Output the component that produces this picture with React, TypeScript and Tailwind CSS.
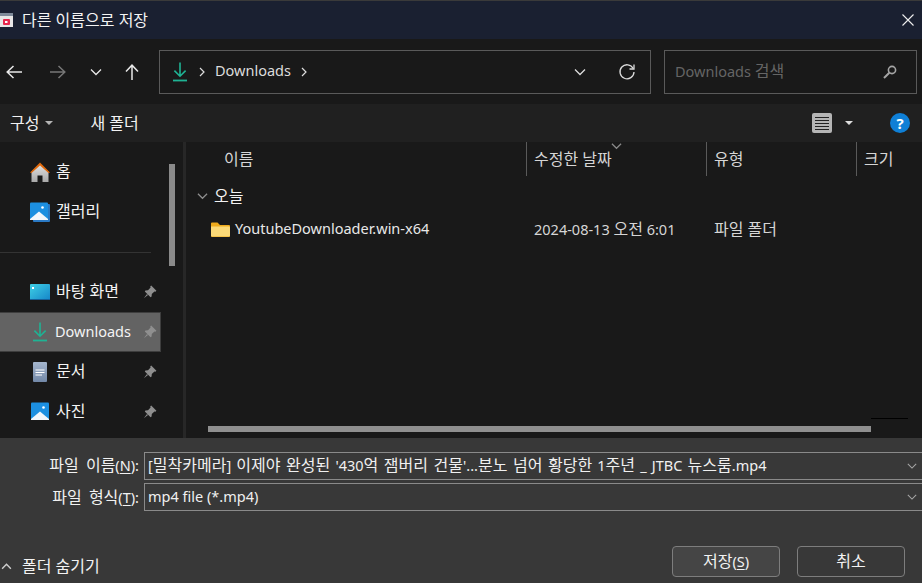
import React from "react";

function T({ children }: { children: string }) {
  const parts = children.split(/([\uAC00-\uD7A3]+(?: [\uAC00-\uD7A3]+)*)/);
  return (
    <>
      {parts.map((p, i) =>
        i % 2 === 1 ? (
          <span key={i} className="text-[16px]">{p}</span>
        ) : (
          <span key={i} className="text-[14.5px]">{p}</span>
        )
      )}
    </>
  );
}

function Pin() {
  return (
    <svg width="14" height="14" viewBox="0 0 14 14" className="shrink-0">
      <path d="M8.2 0.6 L13.4 5.8 L12.4 6.8 L11.4 6.4 L8.8 9 L8.6 11.6 L7.6 12.2 L1.8 6.4 L2.4 5.4 L5 5.2 L7.6 2.6 L7.2 1.6 Z" fill="#8f8f8f" />
      <path d="M4 9 L0.8 13.2 L5 10 Z" fill="#8f8f8f" />
    </svg>
  );
}

function DownloadIcon() {
  return (
    <svg width="20" height="20" viewBox="0 0 20 20" className="shrink-0">
      <path d="M10 0.5 V14 M4.4 8.6 L10 14.2 L15.6 8.6" fill="none" stroke="#1fb394" strokeWidth="1.6" />
      <path d="M3 18.5 H17" stroke="#1fb394" strokeWidth="1.8" />
    </svg>
  );
}

function Home() {
  return (
    <svg width="20" height="20" viewBox="0 0 20 20">
      <defs>
        <linearGradient id="hb" x1="0" y1="0" x2="0" y2="1">
          <stop offset="0" stopColor="#e4e4e4" />
          <stop offset="1" stopColor="#a8a8a8" />
        </linearGradient>
      </defs>
      <path d="M1.5 10 L10 2 L18.5 10 V20 H12.5 V13.5 H7.5 V20 H1.5 Z" fill="url(#hb)" />
      <path d="M0 10.5 L10 0.5 L20 10.5 L18.5 11 L10 3.5 L1.5 11 Z" fill="#e0690c" />
    </svg>
  );
}

function Picture({ stack }: { stack?: boolean }) {
  return (
    <svg width="20" height="20" viewBox="0 0 20 20">
      {stack && <rect x="3" y="2" width="17" height="18" rx="1" fill="#2a79c4" />}
      <rect x="0" y="0.5" width="18" height="17.5" rx="1" fill="#1c8fe0" />
      <path d="M0 17 L9 9.5 L18 17 V18 H0 Z" fill="#f2f6fb" />
      <circle cx="12.5" cy="5.5" r="1.3" fill="#fff" />
    </svg>
  );
}

function SideItem({ icon, label, pin, active }: { icon: React.ReactNode; label: string; pin?: boolean; active?: boolean }) {
  return (
    <div className={`flex items-center h-10 w-[161px] pr-[3px] text-[#f4f4f4] border ${active ? "bg-[#636363] border-[#3e3e3e] border-l-0 pl-[30px]" : "border-transparent pl-[29px]"}`}>
      <span className={`shrink-0 flex items-center ${active ? "w-[25px]" : "w-[26px]"}`}>{icon}</span>
      <span className={`flex-1 whitespace-nowrap ${active ? "" : "-translate-y-px"}`}><T>{label}</T></span>
      {pin && <Pin />}
    </div>
  );
}

function Chevron({ className, color = "#d8d8d8" }: { className?: string; color?: string }) {
  return (
    <svg width="12" height="8" viewBox="0 0 12 8" className={className}>
      <path d="M1 1.5 L6 6.5 L11 1.5" fill="none" stroke={color} strokeWidth="1.3" />
    </svg>
  );
}

function Caret({ color = "#b5b5b5" }: { color?: string }) {
  return <span className="inline-block border-x-[4px] border-x-transparent border-t-[4px]" style={{ borderTopColor: color }} />;
}

function Accel({ c }: { c: string }) {
  return <span className="underline underline-offset-2 text-[14.5px]">{c}</span>;
}

export default function App() {
  return (
    <div className="w-[922px] h-[583px] overflow-hidden flex flex-col text-[14.5px] text-[#f2f2f2] bg-[#191919] font-['Noto_Sans','Noto_Sans_CJK_KR',sans-serif]">
      {/* title bar */}
      <div className="h-[39px] shrink-0 flex items-center bg-[#1a2031] border-t border-[#3a3a3a]">
        <svg width="14" height="16" viewBox="0 0 14 16" className="shrink-0">
          <rect x="0" y="1" width="13" height="3" fill="#7f8a99" />
          <rect x="0" y="4" width="13" height="11" fill="#e8e6e6" />
          <rect x="3" y="7" width="7" height="6" rx="1" fill="#e8274d" />
          <rect x="5" y="9" width="2.5" height="2" fill="#fff" />
        </svg>
        <span className="ml-2 flex-1 text-[#f4f4f4]"><T>다른 이름으로 저장</T></span>
        <svg width="12" height="12" viewBox="0 0 12 12" className="mr-[8px]">
          <path d="M0.5 0.5 L11.5 11.5 M11.5 0.5 L0.5 11.5" stroke="#eee" strokeWidth="1.1" />
        </svg>
      </div>

      {/* nav bar */}
      <div className="h-[65px] shrink-0 flex items-center bg-[#191919] pl-[6px] pr-[5px]">
        <svg width="16" height="14" viewBox="0 0 16 14" className="shrink-0">
          <path d="M16 7 H1.5 M7.5 1 L1.2 7 L7.5 13" fill="none" stroke="#e8e8e8" strokeWidth="1.5" />
        </svg>
        <svg width="16" height="14" viewBox="0 0 16 14" className="shrink-0 ml-[28px]">
          <path d="M0 7 H14.5 M8.5 1 L14.8 7 L8.5 13" fill="none" stroke="#777777" strokeWidth="1.5" />
        </svg>
        <Chevron className="ml-[24px] shrink-0" color="#e8e8e8" />
        <svg width="14" height="16" viewBox="0 0 14 16" className="shrink-0 ml-[23px]">
          <path d="M7 16 V1.5 M1 7.5 L7 1.2 L13 7.5" fill="none" stroke="#e8e8e8" strokeWidth="1.5" />
        </svg>
        <div className="ml-[20px] w-[492px] shrink-0 h-[44px] flex items-center border border-[#5a5a5a] pl-[10px] pr-[14px]">
          <DownloadIcon />
          <svg width="6" height="10" viewBox="0 0 6 10" className="ml-[9px]"><path d="M1 1 L5 5 L1 9" fill="none" stroke="#ddd" strokeWidth="1.2" /></svg>
          <span className="ml-[10px] text-[#dcdcdc] -translate-y-px">Downloads</span>
          <svg width="6" height="10" viewBox="0 0 6 10" className="ml-[10px]"><path d="M1 1 L5 5 L1 9" fill="none" stroke="#ddd" strokeWidth="1.2" /></svg>
          <span className="flex-1" />
          <Chevron className="mr-[32px]" color="#dcdcdc" />
          <svg width="18" height="18" viewBox="0 0 18 18">
            <path d="M15.2 5.5 A7 7 0 1 0 16 9" fill="none" stroke="#dcdcdc" strokeWidth="1.3" />
            <path d="M16 1.5 V6 H11.5" fill="none" stroke="#dcdcdc" strokeWidth="1.3" />
          </svg>
        </div>
        <div className="ml-[13px] w-[253px] shrink-0 h-[44px] flex items-center border border-[#5a5a5a] pl-[10px] pr-[19px]">
          <span className="flex-1 text-[#656565] -translate-y-px"><T>Downloads 검색</T></span>
          <svg width="14" height="14" viewBox="0 0 14 14">
            <circle cx="9" cy="5" r="3.6" fill="none" stroke="#a5a5a5" strokeWidth="1.6" />
            <path d="M6.3 7.7 L1 13" stroke="#a5a5a5" strokeWidth="2" />
          </svg>
        </div>
      </div>

      {/* toolbar */}
      <div className="h-[38px] shrink-0 flex items-center bg-[#202020] pl-[10px] pr-[12px]">
        <T>구성</T>
        <span className="ml-[6px] flex"><Caret /></span>
        <span className="ml-[37px]"><T>새 폴더</T></span>
        <span className="flex-1" />
        <span className="w-5 h-5 bg-[#b5b5b5] rounded-[2px] flex flex-col justify-center gap-[2px] px-[3px]">
          <span className="h-px bg-[#222]" /><span className="h-px bg-[#222]" /><span className="h-px bg-[#222]" /><span className="h-px bg-[#222]" /><span className="h-px bg-[#222]" />
        </span>
        <span className="ml-[13px] flex"><Caret color="#dddddd" /></span>
        <span className="ml-[37px] w-5 h-5 rounded-full bg-[#0f7fd6] flex items-center justify-center text-white font-bold text-[15px] leading-none">?</span>
      </div>

      {/* main */}
      <div className="h-[296px] shrink-0 flex bg-[#191919]">
        {/* sidebar */}
        <div className="w-[183px] shrink-0 flex">
          <div className="w-[169px] shrink-0 flex flex-col pt-[10px]">
            <SideItem icon={<Home />} label="홈" />
            <SideItem icon={<Picture stack />} label="갤러리" />
            <div className="h-px w-[151px] bg-[#333333] mt-[20px] mb-[19px]" />
            <SideItem pin label="바탕 화면" icon={
              <svg width="20" height="16" viewBox="0 0 20 16">
                <defs>
                  <linearGradient id="dk" x1="0" y1="0" x2="1" y2="1">
                    <stop offset="0" stopColor="#3fd0e6" />
                    <stop offset="1" stopColor="#1585c8" />
                  </linearGradient>
                </defs>
                <rect width="20" height="16" rx="1" fill="url(#dk)" />
                <rect y="15" width="20" height="1" fill="#15609a" />
                <rect x="2" y="3" width="2" height="2" fill="#fff" />
              </svg>
            } />
            <SideItem active pin label="Downloads" icon={<DownloadIcon />} />
            <SideItem pin label="문서" icon={
              <svg width="20" height="20" viewBox="0 0 20 20">
                <defs>
                  <linearGradient id="dc" x1="0" y1="0" x2="0" y2="1">
                    <stop offset="0" stopColor="#a5b6cd" />
                    <stop offset="1" stopColor="#7288a8" />
                  </linearGradient>
                </defs>
                <rect x="3" y="0" width="14" height="20" rx="1" fill="url(#dc)" />
                <path d="M5.5 8 H14.5 M5.5 10.5 H14.5 M5.5 13 H12" stroke="#fff" strokeWidth="1" />
              </svg>
            } />
            <SideItem pin label="사진" icon={<span className="pl-[1px] flex"><Picture /></span>} />
          </div>
          <div className="w-[14px] shrink-0 pt-[22px]">
            <div className="w-[6px] h-[102px] bg-[#8a8a8a]" />
          </div>
        </div>
        <div className="w-[3px] shrink-0 bg-[#272727]" />

        {/* list */}
        <div className="flex-1 flex flex-col min-w-0">
          <div className="h-[34px] shrink-0 flex text-[#d6d6d6] relative">
            <div className="w-[340px] pl-[38px] flex items-center"><span><T>이름</T></span></div>
            <div className="w-[180px] pl-[7px] flex items-center border-l border-[#5a5a5a] relative">
              <span><T>수정한 날짜</T></span>
              <Chevron className="absolute left-[84px] top-0 w-[11px]" color="#8a8a8a" />
            </div>
            <div className="w-[150px] pl-[7px] flex items-center border-l border-[#5a5a5a]"><span><T>유형</T></span></div>
            <div className="flex-1 pl-[7px] flex items-center border-l border-[#5a5a5a]"><span><T>크기</T></span></div>
          </div>
          <div className="h-[40px] flex items-center pl-[11px] text-[#f2f2f2]">
            <Chevron color="#8f8f8f" className="w-[11px]" />
            <span className="ml-[6px]"><T>오늘</T></span>
          </div>
          <div className="h-[26px] flex items-center text-[#e8e8e8]">
            <span className="w-[340px] flex items-center pl-[25px]">
              <svg width="19" height="15" viewBox="0 0 19 15" className="shrink-0">
                <path d="M0 1.5 A1 1 0 0 1 1 0.5 H6.5 L9 3 H18 A1 1 0 0 1 19 4 V14 A1 1 0 0 1 18 15 H1 A1 1 0 0 1 0 14 Z" fill="#eeaa1c" />
                <path d="M0 4.5 H18 A1 1 0 0 1 19 5.5 V13.5 A1 1 0 0 1 18 14.5 H1 A1 1 0 0 1 0 13.5 Z" fill="#fbd977" />
              </svg>
              <span className="ml-[5px]">YoutubeDownloader.win-x64</span>
            </span>
            <span className="w-[180px] pl-[8px] text-[#d6d6d6]"><T>2024-08-13 오전 6:01</T></span>
            <span className="pl-[8px] text-[#d6d6d6]"><T>파일 폴더</T></span>
          </div>
          <span className="flex-1" />
          <div className="h-[8px] flex justify-end pr-[14px]">
            <span className="h-px w-[37px] bg-black" />
          </div>
          <div className="h-[12px] shrink-0 pl-[22px]">
            <div className="h-[6px] w-[663px] bg-[#8f8f8f]" />
          </div>
        </div>
      </div>

      {/* footer */}
      <div className="flex-1 bg-[#383838] flex flex-col pt-[14px]">
        <div className="flex items-center h-[28px]">
          <span className="w-[139px] text-right shrink-0 whitespace-nowrap -translate-y-px [word-spacing:3px]"><T>파일 이름(</T><Accel c="N" />):</span>
          <div className="ml-[5px] flex-1 h-[28px] flex items-center border border-r-0 border-[#8a8a8a] pl-[3px] pr-[5px] min-w-0">
            <span className="flex-1 whitespace-nowrap overflow-hidden text-[#f0f0f0] -translate-y-px [word-spacing:1.4px]"><T>[밀착카메라] 이제야 완성된 '430억 잼버리 건물'...분노 넘어 황당한 1주년 _ JTBC 뉴스룸.mp4</T></span>
            <Chevron color="#a5a5a5" className="w-[10px]" />
          </div>
        </div>
        <div className="flex items-center h-[28px] mt-[3px]">
          <span className="w-[139px] text-right shrink-0 whitespace-nowrap [word-spacing:3px]"><T>파일 형식(</T><Accel c="T" />):</span>
          <div className="ml-[5px] flex-1 h-[28px] flex items-center border border-r-0 border-[#8a8a8a] pl-[3px] pr-[5px]">
            <span className="flex-1 text-[#f0f0f0]">mp4 file (*.mp4)</span>
            <Chevron color="#a5a5a5" className="w-[10px]" />
          </div>
        </div>
        <div className="flex items-end justify-between mt-[35px] pl-[1px] pr-[17px]">
          <div className="flex items-center h-[24px] mb-[-1px]">
            <svg width="11" height="7" viewBox="0 0 12 8"><path d="M1 6.5 L6 1.5 L11 6.5" fill="none" stroke="#cfcfcf" strokeWidth="1.6" /></svg>
            <span className="ml-[10px]"><T>폴더 숨기기</T></span>
          </div>
          <div className="flex gap-[17px]">
            <div className="w-[108px] h-[31px] flex items-center justify-center rounded-[4px] border border-[#7d7d7d] bg-[#454545]"><span className="-translate-y-px"><T>저장(</T><Accel c="S" />)</span></div>
            <div className="w-[108px] h-[31px] flex items-center justify-center rounded-[4px] border border-[#7d7d7d] bg-[#383838]"><span className="-translate-y-px"><T>취소</T></span></div>
          </div>
        </div>
      </div>
    </div>
  );
}
